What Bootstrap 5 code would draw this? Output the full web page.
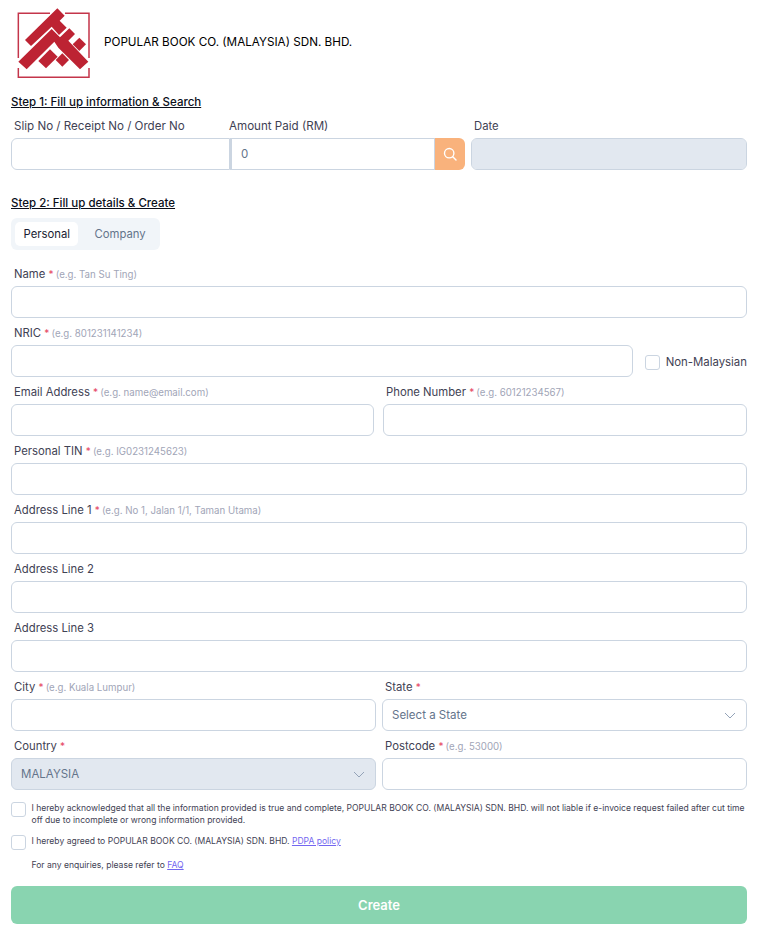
<!DOCTYPE html>
<html lang="en">
<head>
<meta charset="utf-8">
<title>e-Invoice</title>
<link href="https://cdn.jsdelivr.net/npm/bootstrap@5.3.0/dist/css/bootstrap.min.css" rel="stylesheet">
<style>
body{font-family:Inter,"Open Sans",sans-serif;font-size:11.4px;color:#3f4254;background:#fff;}
.page-wrap{padding:0 13px 0 11px;}
.brand-row{height:95px;padding-top:5px;}
.brand-logo{width:90px;height:80px;flex:none;margin-left:-1px;}
.brand-name{font-size:11.7px;font-weight:400;color:#000;margin-left:4px;margin-top:29px;line-height:16px;}
.step-title{font-size:11.5px;font-weight:500;color:#0b0f1a;text-decoration:underline;line-height:14px;}
.step-two{margin-top:26px;}
.label-gap{margin-top:10px;}
.fld-label{display:block;font-size:11.3px;color:#3f4254;line-height:15px;padding-left:3px;margin-bottom:4px;height:15px;white-space:nowrap;}
.fld-label.step-one-label{font-size:11.6px;}
.fld-label .req{color:#e5445f;font-size:10px;}
.fld-label .hint{color:#a1a5b7;font-size:9.7px;margin-left:-1px;}
.fld-input.form-control,.fld-input.form-select{height:32px;border:1px solid #cbd5e1;border-radius:6px;font-size:11.5px;padding:0 9px;color:#64748b;box-shadow:none;background-color:#fff;}
.fld-input.form-select{background-image:url("data:image/svg+xml,%3csvg xmlns='http://www.w3.org/2000/svg' viewBox='0 0 12 7'%3e%3cpath fill='none' stroke='%2394a3b8' stroke-width='1' d='M1 1l5 5 5-5'/%3e%3c/svg%3e");background-size:12px 7px;background-position:right 10px center;padding:2px 30px 0 9px;}
.fld-input.is-locked,.fld-input.is-locked:disabled{background-color:#e2e8f0;color:#64748b;opacity:1;}
.search-group .fld-input{flex:none;}
.search-left{width:219px!important;border-radius:6px 0 0 6px!important;}
.search-mid{width:205px!important;border-left-width:2px!important;border-radius:0!important;padding-left:9px!important;}
.search-btn{width:30px;height:32px;background:#f9b27c;border:0;border-radius:0 6px 6px 0;padding:0;display:flex;align-items:center;justify-content:center;}
.amount-head{width:215px;}
.date-col{margin-left:6px;}
.form-rows{gap:8px;display:flex;flex-direction:column;}
.seg-wrap{background:#f1f5f9;border-radius:6px;padding:4px;width:149px;height:32px;margin:8px 0 17px;gap:7px;}
.seg-item{font-size:11.3px;line-height:24px;height:24px;padding:0 9px;border-radius:5px;color:#64748b;}
.seg-item.is-on{background:#fff;color:#181c32;padding:0 8.5px;}
.chk-box.form-check-input{width:15px;height:15px;margin:0;border:1px solid #cbd5e1;border-radius:3px;flex:none;}
.non-my{font-size:11.4px;white-space:nowrap;margin-left:6px;padding-top:4px;}
.chk-box.form-check-input.chk-after{margin:2px 0 0 12px;}
.pair-six{gap:6px;}
.pair-nine{gap:9px;}
.pair-six>div{flex:1 1 0;min-width:0;}
.pair-nine>div{flex:none;width:364px;}
.pair-nine>div:first-child{width:363px;}
.legal{font-size:8.57px;line-height:12px;color:#3f4254;}
.legal a{color:#7367f0;}
.legal .chk-box.form-check-input{margin-right:5.5px;}
.legal-first{margin-top:12px;}
.legal-next{margin-top:9px;}
.legal-note{margin-top:9px;padding-left:20.5px;}
.create-btn.btn{height:38px;background:#89d4b0;border:0;color:#fff;font-size:13px;font-weight:600;border-radius:6px;opacity:1;width:100%;margin-top:15px;padding:2px 0 0;}
</style>
</head>
<body>
<div class="page-wrap">
  <div class="brand-row d-flex align-items-start">
    <svg class="brand-logo" viewBox="0 0 270 240" aria-label="Logo">
      <path d="M25 159V25H120M165 25H237V159M237 189V217H25V189" fill="none" stroke="#c4354a" stroke-width="4.5"/>
      <g fill="#bd2333">
        <path d="M45 105 142 10 164 32 149 47 170 68 147 90 125 65 63 123Z"/>
        <path d="M25 170 125 72 150 97 178 70 195 87 175 107 235 170 210 193 145 128 133 110 50 193Z"/>
        <path d="M85 168 120 133 143 155 108 190Z"/>
        <path d="M157 145 177 165 157 185 137 165Z"/>
        <path d="M208 98 228 118 208 138 188 118Z"/>
      </g>
    </svg>
    <span class="brand-name">POPULAR BOOK CO. (MALAYSIA) SDN. BHD.</span>
  </div>

  <div class="step-title">Step 1: Fill up information &amp; Search</div>
  <div class="d-flex label-gap">
    <div class="search-group">
      <div class="d-flex">
        <label class="fld-label step-one-label amount-head">Slip No / Receipt No / Order No</label>
        <label class="fld-label step-one-label">Amount Paid (RM)</label>
      </div>
      <div class="d-flex">
        <input class="form-control fld-input search-left" type="text">
        <input class="form-control fld-input search-mid" type="text" value="0">
        <button class="search-btn" type="button" aria-label="Search">
          <svg width="14" height="14" viewBox="0 0 14 14" fill="none" stroke="#fff" stroke-width="1.4"><circle cx="6.2" cy="6.2" r="4.7"/><path d="M9.8 9.8 13 13" stroke-linecap="round"/></svg>
        </button>
      </div>
    </div>
    <div class="flex-grow-1 date-col">
      <label class="fld-label">Date</label>
      <input class="form-control fld-input is-locked" type="text" disabled>
    </div>
  </div>

  <div class="step-title step-two">Step 2: Fill up details &amp; Create</div>
  <div class="seg-wrap d-flex">
    <div class="seg-item is-on">Personal</div>
    <div class="seg-item">Company</div>
  </div>

  <div class="form-rows">
    <div>
      <label class="fld-label">Name <span class="req">*</span> <span class="hint">(e.g. Tan Su Ting)</span></label>
      <input class="form-control fld-input" type="text">
    </div>
    <div>
      <label class="fld-label">NRIC <span class="req">*</span> <span class="hint">(e.g. 801231141234)</span></label>
      <div class="d-flex align-items-center">
        <input class="form-control fld-input flex-grow-1" type="text">
        <input class="form-check-input chk-box chk-after" type="checkbox">
        <span class="non-my">Non-Malaysian</span>
      </div>
    </div>
    <div class="d-flex pair-nine">
      <div>
        <label class="fld-label">Email Address <span class="req">*</span> <span class="hint">(e.g. name@email.com)</span></label>
        <input class="form-control fld-input" type="text">
      </div>
      <div>
        <label class="fld-label">Phone Number <span class="req">*</span> <span class="hint">(e.g. 60121234567)</span></label>
        <input class="form-control fld-input" type="text">
      </div>
    </div>
    <div>
      <label class="fld-label">Personal TIN <span class="req">*</span> <span class="hint">(e.g. IG0231245623)</span></label>
      <input class="form-control fld-input" type="text">
    </div>
    <div>
      <label class="fld-label">Address Line 1 <span class="req">*</span> <span class="hint">(e.g. No 1, Jalan 1/1, Taman Utama)</span></label>
      <input class="form-control fld-input" type="text">
    </div>
    <div>
      <label class="fld-label">Address Line 2</label>
      <input class="form-control fld-input" type="text">
    </div>
    <div>
      <label class="fld-label">Address Line 3</label>
      <input class="form-control fld-input" type="text">
    </div>
    <div class="d-flex pair-six">
      <div>
        <label class="fld-label">City <span class="req">*</span> <span class="hint">(e.g. Kuala Lumpur)</span></label>
        <input class="form-control fld-input" type="text">
      </div>
      <div>
        <label class="fld-label">State <span class="req">*</span></label>
        <select class="form-select fld-input"><option>Select a State</option></select>
      </div>
    </div>
    <div class="d-flex pair-six">
      <div>
        <label class="fld-label">Country <span class="req">*</span></label>
        <select class="form-select fld-input is-locked" disabled><option>MALAYSIA</option></select>
      </div>
      <div>
        <label class="fld-label">Postcode <span class="req">*</span> <span class="hint">(e.g. 53000)</span></label>
        <input class="form-control fld-input" type="text">
      </div>
    </div>
  </div>

  <div class="d-flex legal legal-first">
    <input class="form-check-input chk-box" type="checkbox">
    <div>I hereby acknowledged that all the information provided is true and complete, POPULAR BOOK CO. (MALAYSIA) SDN. BHD. will not liable if e-invoice request failed after cut time off due to incomplete or wrong information provided.</div>
  </div>
  <div class="d-flex legal legal-next">
    <input class="form-check-input chk-box" type="checkbox">
    <div>I hereby agreed to POPULAR BOOK CO. (MALAYSIA) SDN. BHD. <a href="#">PDPA policy</a></div>
  </div>
  <div class="legal legal-note">For any enquiries, please refer to <a href="#">FAQ</a></div>
  <button class="btn create-btn" type="button">Create</button>
</div>
</body>
</html>
